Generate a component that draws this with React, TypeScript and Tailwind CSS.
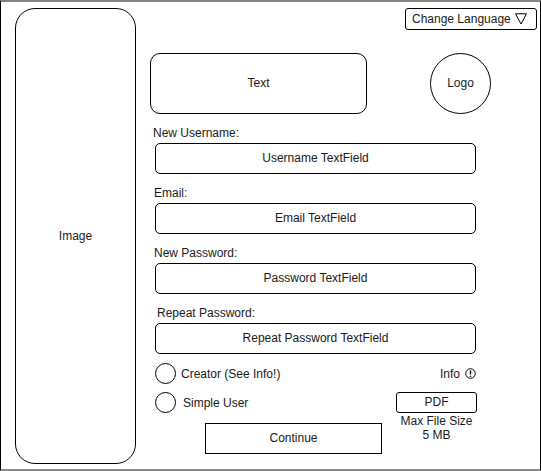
import React from "react";

const font = { fontFamily: '"Liberation Sans", Arial, sans-serif' };

function Field({ label, text, labelMl }: { label: string; text: string; labelMl: string }) {
  return (
    <div className="mt-[12px] flex flex-col">
      <div className={`h-[14px] leading-[14px] ${labelMl}`}>{label}</div>
      <div className="mt-[3px] ml-[19px] flex h-[31px] w-[321px] items-center justify-center rounded-[5px] border border-black pb-[2px]">
        {text}
      </div>
    </div>
  );
}

function Radio({ label, gap }: { label: string; gap: string }) {
  return (
    <div className={`flex h-[21px] items-center ${gap}`}>
      <div className="h-[21px] w-[21px] rounded-full border border-black" />
      <span className="leading-[14px]">{label}</span>
    </div>
  );
}

export default function App() {
  return (
    <div
      style={font}
      className="box-border flex h-[471px] w-[541px] border-x border-t-2 border-b-2 border-x-black border-t-[#858585] border-b-[#8a8a8a] bg-white text-[12px] text-[#1a1a1a]"
    >
      <div className="ml-[14px] mt-[6px] flex h-[456px] w-[121px] shrink-0 items-center justify-center rounded-[20px] border border-black">
        Image
      </div>
      <div className="flex flex-1 flex-col">
        <div className="mt-[6px] mr-[3px] flex h-[22px] w-[132px] items-center self-end rounded-[3px] border border-black pl-[6px] pb-[1px]">
          <span className="leading-[14px]">Change Language</span>
          <svg className="ml-[4px]" width="12" height="12" viewBox="0 0 12 12">
            <polygon points="0.5,0.8 11.5,0.8 6,11" fill="none" stroke="#000" strokeWidth="1" />
          </svg>
        </div>
        <div className="mt-[23px] flex">
          <div className="ml-[14px] flex h-[61px] w-[217px] items-center justify-center rounded-[10px] border border-black pb-[2px]">
            Text
          </div>
          <div className="ml-[63px] flex h-[61px] w-[61px] items-center justify-center rounded-full border border-black pb-[2px]">
            Logo
          </div>
        </div>
        <Field label="New Username:" text="Username TextField" labelMl="ml-[17px]" />
        <Field label="Email:" text="Email TextField" labelMl="ml-[18px]" />
        <Field label="New Password:" text="Password TextField" labelMl="ml-[18px]" />
        <Field label="Repeat Password:" text="Repeat Password TextField" labelMl="ml-[21px]" />
        <div className="ml-[19px] flex">
          <div className="flex w-[241px] flex-col">
            <div className="mt-[9px]">
              <Radio label="Creator (See Info!)" gap="gap-[5px]" />
            </div>
            <div className="mt-[8px]">
              <Radio label="Simple User" gap="gap-[7px]" />
            </div>
            <div className="ml-[50px] mt-[10px] flex h-[31px] w-[177px] items-center justify-center border border-black pb-[2px]">
              Continue
            </div>
          </div>
          <div className="flex w-[81px] flex-col items-center">
            <div className="mt-[9px] flex h-[21px] items-center gap-[5px] self-end pr-[1px]">
              <span className="leading-[14px]">Info</span>
              <svg width="11" height="11" viewBox="0 0 11 11">
                <circle cx="5.5" cy="5.5" r="4.8" fill="none" stroke="#000" strokeWidth="1" />
                <line x1="5.5" y1="2.4" x2="5.5" y2="6.4" stroke="#000" strokeWidth="1.4" />
                <circle cx="5.5" cy="8.2" r="0.8" fill="#000" />
              </svg>
            </div>
            <div className="mt-[8px] flex h-[21px] w-[81px] items-center justify-center rounded-[3px] border border-black pb-[1px]">
              PDF
            </div>
            <div className="mt-[1px] h-[14px] whitespace-nowrap leading-[14px]">Max File Size</div>
            <div className="h-[14px] leading-[14px]">5 MB</div>
          </div>
        </div>
      </div>
    </div>
  );
}
